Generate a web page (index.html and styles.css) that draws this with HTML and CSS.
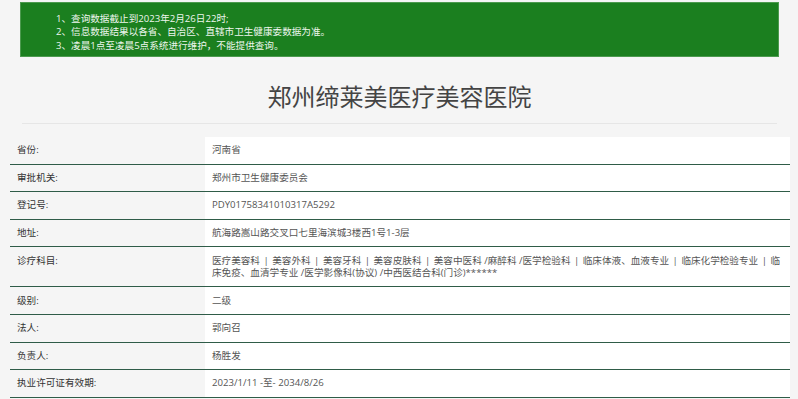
FILE: index.html
```html
<!DOCTYPE html>
<html lang="zh-CN">
<head>
<meta charset="utf-8">
<title>郑州缔莱美医疗美容医院</title>
<link rel="stylesheet" href="styles.css">
</head>
<body>
<div class="notice">
  <p>1、查询数据截止到2023年2月26日22时;</p>
  <p>2、信息数据结果以各省、自治区、直辖市卫生健康委数据为准。</p>
  <p>3、凌晨1点至凌晨5点系统进行维护，不能提供查询。</p>
</div>
<h1 class="title">郑州缔莱美医疗美容医院</h1>
<div class="info">
  <div class="row"><div class="label">省份:</div><div class="value">河南省</div></div>
  <div class="row"><div class="label">审批机关:</div><div class="value">郑州市卫生健康委员会</div></div>
  <div class="row"><div class="label">登记号:</div><div class="value">PDY01758341010317A5292</div></div>
  <div class="row"><div class="label">地址:</div><div class="value">航海路嵩山路交叉口七里海滨城3楼西1号1-3层</div></div>
  <div class="row"><div class="label">诊疗科目:</div><div class="value">医疗美容科 <span class="sep">|</span> 美容外科 <span class="sep">|</span> 美容牙科 <span class="sep">|</span> 美容皮肤科 <span class="sep">|</span> 美容中医科 /麻醉科 /医学检验科 <span class="sep">|</span> 临床体液、血液专业 <span class="sep">|</span> 临床化学检验专业 <span class="sep">|</span> 临床免疫、血清学专业 /医学影像科(协议) /中西医结合科(门诊)******</div></div>
  <div class="row"><div class="label">级别:</div><div class="value">二级</div></div>
  <div class="row"><div class="label">法人:</div><div class="value">郭向召</div></div>
  <div class="row"><div class="label">负责人:</div><div class="value">杨胜发</div></div>
  <div class="row"><div class="label">执业许可证有效期:</div><div class="value">2023/1/11 -至- 2034/8/26</div></div>
</div>
</body>
</html>
```
FILE: styles.css
```css
html, body {
  margin: 0;
  padding: 0;
}
body {
  background: #f5f5f5;
  font-family: "Open Sans", "Noto Sans CJK SC", sans-serif;
  color: #333;
}
.notice {
  margin: 2px 19px 0 20px;
  height: 55px;
  box-sizing: border-box;
  padding: 8.5px 0 0 35px;
  background: #1b7f1f;
  border: 1px solid #4c9a4f;
  color: #eef6ee;
  font-size: 9.6px;
  line-height: 13.5px;
}
.notice p {
  margin: 0;
}
.title {
  margin: 0 21px 0 22px;
  height: 67px;
  box-sizing: border-box;
  padding-top: 25px;
  border-bottom: 1px solid #e6e6e6;
  text-align: center;
  font-weight: normal;
  font-size: 24px;
  line-height: 30px;
  color: #444;
}
.info {
  margin: 13px 8px 0 10px;
  font-size: 9.6px;
  line-height: 12.4px;
}
.row {
  display: grid;
  grid-template-columns: 195px 1fr;
  border-bottom: 1px solid #2f5c48;
}
.label {
  padding: 7.2px 7px 7px;
  color: #333;
}
.value {
  padding: 7.2px 7px 7px;
  background: #fff;
  color: #555;
  word-break: break-all;
}
.sep {
  margin: 0 1px;
}
```
